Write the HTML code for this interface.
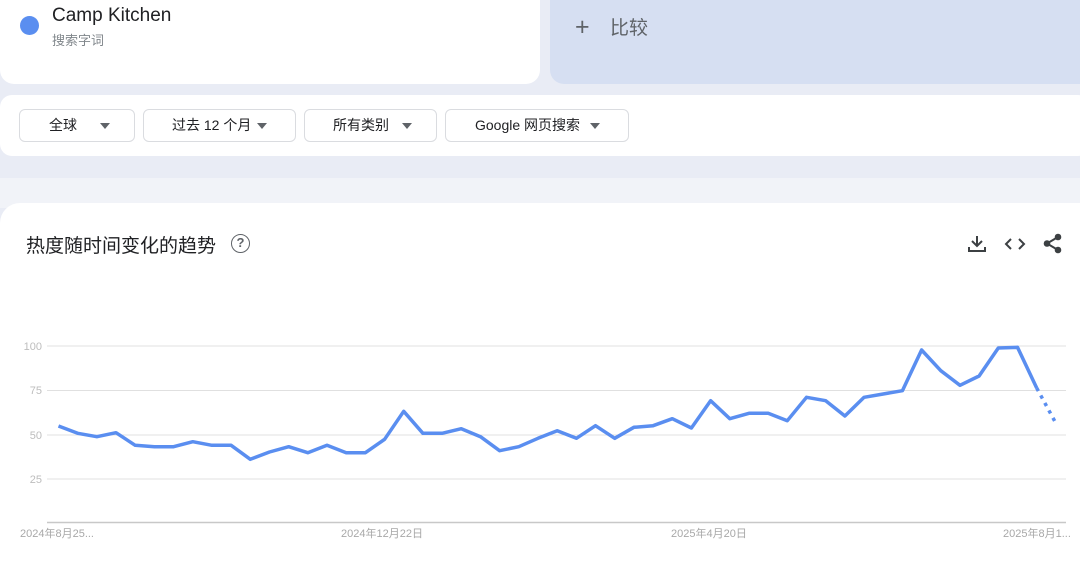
<!DOCTYPE html>
<html><head><meta charset="utf-8"><style>
*{margin:0;padding:0;box-sizing:border-box}
body{width:1080px;height:546px;overflow:hidden;background:#e9ecf5;font-family:"Liberation Sans","Noto Sans CJK SC",sans-serif;position:relative}
.abs{position:absolute}
.btn{position:absolute;top:109px;height:33px;border:1px solid #dadce0;border-radius:6px;background:#fff;font-size:14px;color:#202124;line-height:31px}
.btn span{position:absolute;top:0}
.tri{position:absolute;top:13px;width:0;height:0;border-left:5px solid transparent;border-right:5px solid transparent;border-top:6px solid #5f6368}
.yl{position:absolute;left:0;width:42px;text-align:right;font-size:11px;color:#bdbdbd;font-family:"Liberation Sans",sans-serif}
.xl{position:absolute;top:525px;font-size:11px;color:#a8a8a8}
</style></head><body>
<div class="abs" style="left:0;top:-20px;width:540px;height:104px;background:#fff;border-radius:0 0 14px 14px"></div>
<div class="abs" style="left:550px;top:-20px;width:540px;height:104px;background:#d6dff2;border-radius:0 0 0 14px"></div>
<div class="abs" style="left:20px;top:16px;width:19px;height:19px;border-radius:50%;background:#5a8ef0"></div>
<div class="abs" style="left:52px;top:5px;font-size:19px;color:#202124">Camp Kitchen</div>
<div class="abs" style="left:52px;top:30px;font-size:13px;color:#80868b">搜索字词</div>
<div class="abs" style="left:575px;top:13px;font-size:25px;color:#5f6368;font-weight:300">+</div>
<div class="abs" style="left:610px;top:13px;font-size:19px;color:#5f6368">比较</div>
<div class="abs" style="left:0;top:95px;width:1090px;height:61px;background:#fff;border-radius:12px"></div>
<div class="btn" style="left:19px;width:116px"><span style="left:29px">全球</span><i class="tri" style="left:80px"></i></div>
<div class="btn" style="left:143px;width:153px"><span style="left:28px">过去 12 个月</span><i class="tri" style="left:113px"></i></div>
<div class="btn" style="left:304px;width:133px"><span style="left:28px">所有类别</span><i class="tri" style="left:97px"></i></div>
<div class="btn" style="left:445px;width:184px"><span style="left:29px">Google 网页搜索</span><i class="tri" style="left:144px"></i></div>
<div class="abs" style="left:0;top:178px;width:1080px;height:30px;background:#f1f3f8"></div>
<div class="abs" style="left:0;top:203px;width:1090px;height:360px;background:#fff;border-radius:20px 0 0 0"></div>
<div class="abs" style="left:26px;top:231px;font-size:19px;color:#202124">热度随时间变化的趋势</div>
<div class="abs" style="left:231px;top:234px;width:19px;height:19px;border:1.8px solid #5f6368;border-radius:50%;font-size:13px;color:#5f6368;text-align:center;line-height:16px;font-weight:bold">?</div>
<svg class="abs" style="left:960px;top:228px" width="110" height="30" viewBox="0 0 110 30" fill="none" stroke="#3c4043" stroke-width="2">
<path d="M17 8v10M12 13l5 5 5-5M9 19v4h16v-4"/>
<path d="M51 11l-5 5 5 5M59 11l5 5-5 5"/>
<circle cx="98" cy="9" r="2.3" fill="#3c4043"/><circle cx="98" cy="22" r="2.3" fill="#3c4043"/><circle cx="87" cy="15.5" r="2.3" fill="#3c4043"/>
<path d="M98 9l-11 6.5 11 6.5"/>
</svg>
<div class="yl" style="top:341px">100</div>
<div class="yl" style="top:385px">75</div>
<div class="yl" style="top:430px">50</div>
<div class="yl" style="top:474px">25</div>
<svg class="abs" style="left:0;top:0" width="1080" height="546">
<g stroke="#e0e0e0" stroke-width="1">
<line x1="47" y1="346" x2="1066" y2="346"/><line x1="47" y1="390.5" x2="1066" y2="390.5"/><line x1="47" y1="435" x2="1066" y2="435"/><line x1="47" y1="479" x2="1066" y2="479"/>
</g>
<line x1="47" y1="522.5" x2="1066" y2="522.5" stroke="#c8c8c8" stroke-width="1.5"/>
<polyline id="pl" fill="none" stroke="#5a8ef0" stroke-width="3.5" stroke-linejoin="round" points=""/>
<polyline id="pd" fill="none" stroke="#5a8ef0" stroke-width="3.5" stroke-dasharray="3.5 5" points=""/>
</svg>
<div class="xl" style="left:20px">2024年8月25...</div>
<div class="xl" style="left:341px">2024年12月22日</div>
<div class="xl" style="left:671px">2025年4月20日</div>
<div class="xl" style="left:1003px">2025年8月1...</div>
<script>
var y=[426,433.3,436.7,432.7,445.3,446.7,446.7,441.7,445.3,445.3,459.3,452,446.7,452.7,445.3,452.7,452.7,439.3,411.3,433.3,433.3,428.7,436.7,450.7,446.7,438.3,430.7,438.3,425.7,438.3,427.3,425.7,418.7,428,400.7,418.7,413.3,413.3,420.7,397.3,400.7,416,397.3,394,390.7,350,370.7,385.3,376,348,347.3,388,423.3];
var p=[];for(var i=0;i<52;i++)p.push((58.5+19.18*i).toFixed(1)+","+y[i]);
document.getElementById('pl').setAttribute('points',p.join(' '));
document.getElementById('pd').setAttribute('points',(58.5+19.18*51).toFixed(1)+","+y[51]+" "+(58.5+19.18*52).toFixed(1)+","+y[52]);
</script>
</body></html>
